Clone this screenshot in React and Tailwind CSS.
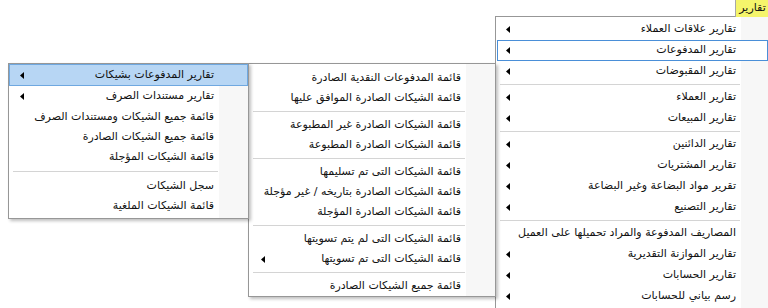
import React from 'react';

const mainItems = [
    { t: 'تقارير علاقات العملاء', arrow: true },
    { t: 'تقارير المدفوعات', arrow: true, hl: true },
    { t: 'تقارير المقبوضات', arrow: true },
    { sep: true },
    { t: 'تقارير العملاء', arrow: true },
    { t: 'تقارير المبيعات', arrow: true },
    { sep: true },
    { t: 'تقارير الدائنين', arrow: true },
    { t: 'تقارير المشتريات', arrow: true },
    { t: 'تقرير مواد البضاعة وغير البضاعة', arrow: true },
    { t: 'تقارير التصنيع', arrow: true },
    { sep: true },
    { t: 'المصاريف المدفوعة والمراد تحميلها على العميل' },
    { t: 'تقارير الموازنة التقديرية', arrow: true },
    { t: 'تقارير الحسابات', arrow: true },
    { t: 'رسم بياني للحسابات', arrow: true },
    { sep: true },
];

const middleItems = [
    { t: 'قائمة المدفوعات النقدية الصادرة' },
    { t: 'قائمة الشيكات الصادرة الموافق عليها' },
    { sep: true },
    { t: 'قائمة الشيكات الصادرة غير المطبوعة' },
    { t: 'قائمة الشيكات الصادرة المطبوعة' },
    { sep: true },
    { t: 'قائمة الشيكات التى تم تسليمها' },
    { t: 'قائمة الشيكات الصادرة بتاريخه / غير مؤجلة' },
    { t: 'قائمة الشيكات الصادرة المؤجلة' },
    { sep: true },
    { t: 'قائمة الشيكات التى لم يتم تسويتها' },
    { t: 'قائمة الشيكات التى تم تسويتها', arrow: true },
    { sep: true },
    { t: 'قائمة جميع الشيكات الصادرة' },
];

const leftItems = [
    { t: 'تقارير المدفوعات بشيكات', arrow: true, hl: true, h: 'h-[22px]' },
    { t: 'تقارير مستندات الصرف', arrow: true, h: 'h-[21px]' },
    { t: 'قائمة جميع الشيكات ومستندات الصرف' },
    { t: 'قائمة جميع الشيكات الصادرة' },
    { t: 'قائمة الشيكات المؤجلة' },
    { sep: true },
    { t: 'سجل الشيكات' },
    { t: 'قائمة الشيكات الملغية' },
];

const Arrow = () => (
    <svg width="4" height="7" viewBox="0 0 4 7" className="shrink-0">
        <path d="M0 3.5L4 0V7Z" fill="#000" />
    </svg>
);

// one dropdown panel, items laid out top to bottom in rtl
const Menu = ({ items, itemH, sepH, padL, hlClass, className }) => (
    <div dir="rtl" className={`absolute flex flex-col border border-[#979797] bg-white ${className}`}>
        <div className="absolute right-0 top-0 bottom-0 w-[29px] bg-[#f7f7f7]" />
        {items.map((it, i) =>
            it.sep ? (
                <div key={i} className={`relative flex items-center ${sepH} mr-[30px] ml-[4px]`}>
                    <div className="w-full border-t border-[#d4d4d4]" />
                </div>
            ) : (
                <div
                    key={i}
                    className={`relative flex items-center justify-between ${it.h || itemH} pr-[34px] ${padL}`}
                >
                    {it.hl && <div className={`absolute top-0 bottom-0 ${hlClass}`} />}
                    <span className="relative whitespace-nowrap text-[11px] text-[#111]">{it.t}</span>
                    {it.arrow && (
                        <span className="relative">
                            <Arrow />
                        </span>
                    )}
                </div>
            )
        )}
    </div>
);

export default function App() {
    return (
        <div className="relative w-[768px] h-[308px] overflow-hidden bg-white font-['DejaVu_Sans',sans-serif]">
            <Menu
                items={mainItems}
                itemH="h-[21px]"
                sepH="h-[5px]"
                padL="pl-[10px]"
                hlClass="left-[1px] right-[2px] border border-[#4a8fd8] bg-white"
                className="left-[495px] top-[16px] w-[276px] h-[300px] pt-[2px]"
            />
            <div
                dir="rtl"
                className="absolute left-[735px] top-0 w-[34px] h-[17px] bg-[#f5f56b] border-l border-[#a8a8a8] flex items-center justify-center text-[11px] text-[#111]"
            >
                تقارير
            </div>
            <Menu
                items={middleItems}
                itemH="h-[20px]"
                sepH="h-[7px]"
                padL="pl-[12px]"
                hlClass=""
                className="left-[248px] top-[63px] w-[248px] h-[234px] pt-[4px] shadow-[2px_2px_3px_rgba(0,0,0,0.25)]"
            />
            <Menu
                items={leftItems}
                itemH="h-[20px]"
                sepH="h-[9px]"
                padL="pl-[11px]"
                hlClass="left-0 right-0 border border-[#6fa8e0] bg-[#b7d6f4]"
                className="left-[8px] top-[63px] w-[241px] h-[156px] shadow-[2px_2px_3px_rgba(0,0,0,0.25)]"
            />
        </div>
    );
}
